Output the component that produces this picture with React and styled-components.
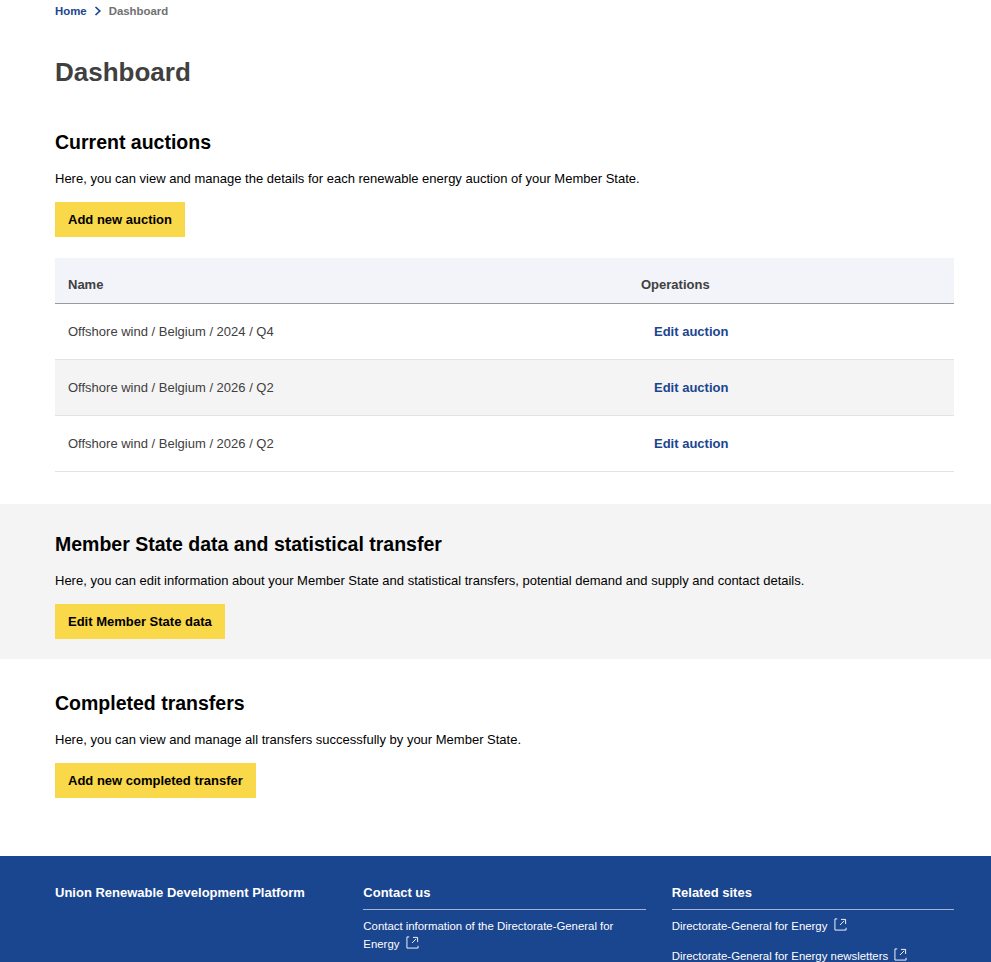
import React from "react";
import styled, { createGlobalStyle } from "styled-components";

const auctions = [
  "Offshore wind / Belgium / 2024 / Q4",
  "Offshore wind / Belgium / 2026 / Q2",
  "Offshore wind / Belgium / 2026 / Q2",
];

const ExternalIcon = () => (
  <IconSvg viewBox="0 0 14 14" fill="none" stroke="currentColor" strokeWidth="1">
    <path d="M3.5 1H1V13H13V10.5" />
    <path d="M6.5 7.5L11 3M7.5 1.5H12.5V6.5" />
  </IconSvg>
);

const App = () => {
  return (
    <Page>
      <GlobalStyle />
      <Main>
        <Breadcrumb>
          <HomeLink>Home</HomeLink>
          <svg width="8" height="10" viewBox="0 0 8 10" fill="none" stroke="#1a458f" strokeWidth="1.7">
            <path d="M1.5 1L5.8 5L1.5 9" />
          </svg>
          <span>Dashboard</span>
        </Breadcrumb>
        <PageTitle>Dashboard</PageTitle>
        <Heading>Current auctions</Heading>
        <Text>Here, you can view and manage the details for each renewable energy auction of your Member State.</Text>
        <Button>Add new auction</Button>
        <Table>
          <HeadRow>
            <HeadCell>Name</HeadCell>
            <HeadCell>Operations</HeadCell>
          </HeadRow>
          {auctions.map((name, i) => (
            <Row key={i} $striped={i === 1}>
              <NameCell>{name}</NameCell>
              <OperationCell>Edit auction</OperationCell>
            </Row>
          ))}
        </Table>
      </Main>

      <GreySection>
        <Heading>Member State data and statistical transfer</Heading>
        <Text>
          Here, you can edit information about your Member State and statistical transfers, potential demand and supply
          and contact details.
        </Text>
        <Button>Edit Member State data</Button>
      </GreySection>

      <LastSection>
        <Heading>Completed transfers</Heading>
        <Text>Here, you can view and manage all transfers successfully by your Member State.</Text>
        <Button>Add new completed transfer</Button>
      </LastSection>

      <Footer>
        <FooterColumn>
          <FooterTitle>Union Renewable Development Platform</FooterTitle>
        </FooterColumn>
        <FooterColumn>
          <FooterHeading>Contact us</FooterHeading>
          <FooterLink>
            Contact information of the Directorate-General for Energy <ExternalIcon />
          </FooterLink>
        </FooterColumn>
        <FooterColumn>
          <FooterHeading>Related sites</FooterHeading>
          <FooterLink>
            Directorate-General for Energy <ExternalIcon />
          </FooterLink>
          <FooterLink>
            Directorate-General for Energy newsletters <ExternalIcon />
          </FooterLink>
        </FooterColumn>
      </Footer>
    </Page>
  );
};

const GlobalStyle = createGlobalStyle`
  html, body {
    margin: 0;
    background: #fff;
    font-family: "Liberation Sans", Arial, sans-serif;
  }
`;

const Page = styled.div`
  height: 962px;
  overflow: hidden;
`;

const Main = styled.main`
  padding: 0 37px 32px 55px;
`;

const Breadcrumb = styled.nav`
  display: flex;
  align-items: center;
  gap: 7px;
  height: 21px;
  font-size: 11.4px;
  font-weight: 700;
  color: #707070;
`;

const HomeLink = styled.span`
  color: #1a458f;
`;

const PageTitle = styled.h1`
  margin: 20px 0 26px;
  font-size: 26px;
  line-height: 62px;
  height: 62px;
  font-weight: 700;
  color: #404040;
`;

const Heading = styled.h2`
  margin: 0 0 14px;
  font-size: 19.5px;
  line-height: 26px;
  font-weight: 700;
  color: #000;
`;

const Text = styled.p`
  margin: 0 0 14px;
  font-size: 13px;
  line-height: 19px;
  color: #000;
`;

const Button = styled.button`
  display: block;
  height: 35px;
  padding: 0 13px;
  border: 0;
  background: #f9d849;
  color: #000;
  font-family: inherit;
  font-size: 13px;
  font-weight: 700;
`;

const Table = styled.div`
  margin-top: 21px;
  font-size: 13px;
`;

const HeadRow = styled.div`
  display: grid;
  grid-template-columns: 573px 1fr;
  align-items: center;
  box-sizing: border-box;
  height: 46px;
  padding-top: 8px;
  background: #f2f4f9;
  border-bottom: 1px solid #9a9a9a;
`;

const HeadCell = styled.div`
  padding-left: 13px;
  font-weight: 700;
  color: #404040;
`;

const Row = styled.div`
  display: grid;
  grid-template-columns: 599px 1fr;
  align-items: center;
  height: 55px;
  background: ${({ $striped }) => ($striped ? "#f4f4f4" : "#fff")};
  border-bottom: 1px solid #e3e3e3;
`;

const NameCell = styled.div`
  padding-left: 13px;
  color: #404040;
`;

const OperationCell = styled.a`
  font-weight: 700;
  color: #1a458f;
`;

const GreySection = styled.section`
  padding: 27px 37px 20px 55px;
  background: #f4f4f4;
`;

const LastSection = styled.section`
  padding: 31px 37px 58px 55px;
`;

const Footer = styled.footer`
  display: grid;
  grid-template-columns: repeat(3, 1fr);
  gap: 26px;
  height: 106px;
  padding: 28px 37px 0 55px;
  background: #1a458f;
  color: #fff;
  font-size: 11.4px;
`;

const FooterColumn = styled.div`
  min-width: 0;
`;

const FooterTitle = styled.div`
  font-size: 13px;
  font-weight: 700;
  line-height: 17px;
`;

const FooterHeading = styled.div`
  padding-bottom: 8px;
  margin-bottom: 7px;
  border-bottom: 1px solid #a3b5d2;
  font-size: 13px;
  font-weight: 700;
  line-height: 17px;
`;

const FooterLink = styled.div`
  margin-bottom: 12px;
  line-height: 18px;
`;

const IconSvg = styled.svg`
  width: 13px;
  height: 13px;
  margin-left: 3px;
  vertical-align: -1px;
`;

export default App;
